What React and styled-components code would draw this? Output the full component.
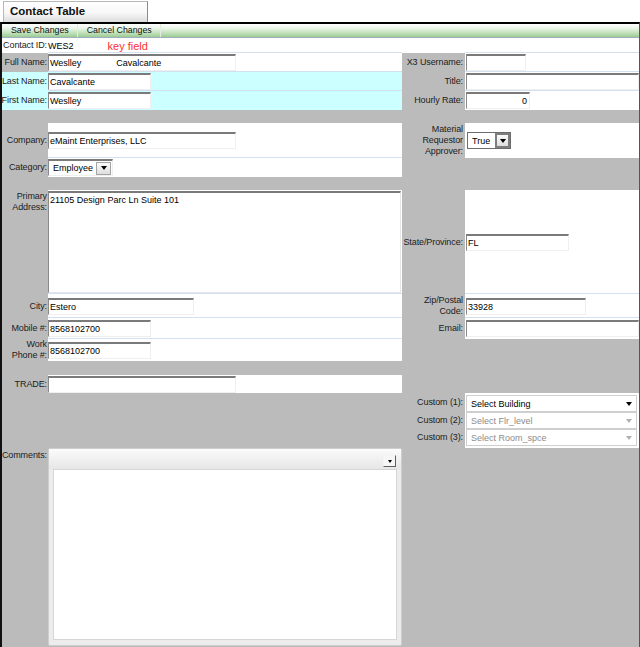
import React from 'react';
import styled, { createGlobalStyle } from 'styled-components';

const GlobalStyle = createGlobalStyle`
  html, body {
    margin: 0;
    padding: 0;
    background: #fff;
  }
  body {
    font-family: "Liberation Sans", Arial, sans-serif;
  }
`;

const Page = styled.div`
  width: 640px;
  height: 647px;
  overflow: hidden;
`;

const TabStrip = styled.div`
  height: 22px;
  padding: 1px 0 0 3px;
  box-sizing: border-box;
`;

const Tab = styled.div`
  width: 145px;
  height: 21px;
  box-sizing: border-box;
  border: 1px solid #b8b8b8;
  border-right-color: #8a8a8a;
  border-bottom: none;
  background: linear-gradient(#ffffff, #f7f7f7 55%, #dcdcdc);
  font: bold 11.5px "Liberation Sans", Arial, sans-serif;
  color: #111;
  padding: 3px 0 0 6px;
`;

const Frame = styled.div`
  height: 625px;
  box-sizing: border-box;
  border-top: 2px solid #000;
  border-left: 2px solid #111;
  border-right: 1px solid #555;
  background: #bbbbbb;
  overflow: hidden;
`;

const Toolbar = styled.div`
  display: flex;
  height: 14px;
  box-sizing: border-box;
  border-bottom: 1px solid #9fb0bd;
  background: linear-gradient(#ffffff 0%, #eef7ec 30%, #c6e3bf 65%, #9bcb93 100%);
`;

const ToolButton = styled.div`
  padding: 0 8px 0 9px;
  font-size: 8.8px;
  line-height: 13px;
  color: #111;
  border-right: 1px solid #e4ece2;
  white-space: nowrap;
`;

const Row = styled.div`
  display: grid;
  grid-template-columns: 46px 354px 63px 174px;
  height: ${p => p.$h}px;
`;

const Gap = styled.div`
  height: ${p => p.$h}px;
`;

const Label = styled.div`
  display: flex;
  align-items: ${p => (p.$top ? 'flex-start' : 'center')};
  justify-content: flex-end;
  text-align: right;
  white-space: nowrap;
  box-sizing: border-box;
  padding: ${p => (p.$top ? `${p.$top}px 1px 0 0` : '0 1px 0 0')};
  background: ${p => p.$bg || 'transparent'};
  font-size: 9px;
  letter-spacing: -0.1px;
  line-height: 11px;
  color: #1c1c1c;
`;

const RightLabel = styled(Label)`
  padding-right: 2px;
`;

const Value = styled.div`
  display: flex;
  align-items: ${p => (p.$top !== undefined ? 'flex-start' : 'center')};
  box-sizing: border-box;
  padding-top: ${p => p.$top || 0}px;
  padding-left: ${p => p.$pl || 0}px;
  background: ${p => p.$bg || 'transparent'};
  box-shadow: ${p => (p.$sep ? 'inset 0 -1px #d3e0ee' : 'none')};
  font-size: 9px;
  color: #000;
`;

const Field = styled.div`
  display: flex;
  align-items: center;
  justify-content: ${p => (p.$right ? 'flex-end' : 'flex-start')};
  width: ${p => p.$w}px;
  height: 17px;
  box-sizing: border-box;
  border-style: solid;
  border-width: 2px 1px 1px 1px;
  border-color: #7a7a7a #efefef #efefef #8a8a8a;
  background: #fff;
  padding: 0 ${p => (p.$right ? 2 : 1)}px 0 1px;
  font-size: 9px;
  color: #000;
  white-space: nowrap;
`;

const Spaced = styled.span`
  margin-left: ${p => p.$ml}px;
`;

const KeyNote = styled.span`
  margin-left: 34px;
  color: #ff3030;
  font-size: 11px;
`;

const TextBox = styled.div`
  width: 353px;
  height: 102px;
  box-sizing: border-box;
  border-style: solid;
  border-width: 2px 1px 1px 1px;
  border-color: #7a7a7a #e6e6e6 #e6e6e6 #8a8a8a;
  background: #fff;
  padding: 2px 1px;
  font-size: 9px;
  line-height: 11px;
`;

const Combo = styled.div`
  display: flex;
  align-items: center;
  justify-content: space-between;
  width: ${p => p.$w}px;
  height: 17px;
  box-sizing: border-box;
  border-style: solid;
  border-width: ${p => (p.$dark ? '1px' : '2px 1px 1px 1px')};
  border-color: ${p => (p.$dark ? '#6c6c6c' : '#7a7a7a #efefef #efefef #8a8a8a')};
  background: #fff;
  padding-left: 4px;
  font-size: 9px;
  color: #000;
`;

const ComboButton = styled.span`
  display: flex;
  align-items: center;
  justify-content: center;
  width: 15px;
  height: ${p => (p.$dark ? 15 : 13)}px;
  box-sizing: border-box;
  border: ${p => (p.$dark ? '2px solid #7e7e7e' : '1px solid #a4a4a4')};
  background: linear-gradient(#fbfbfb, #dedede);
  margin-right: ${p => (p.$dark ? 0 : 1)}px;
`;

const Caret = styled.span`
  width: 0;
  height: 0;
  border-left: ${p => p.$size || 3}px solid transparent;
  border-right: ${p => p.$size || 3}px solid transparent;
  border-top: ${p => (p.$size || 3) + 1}px solid ${p => p.$color || '#000'};
`;

const Dropdown = styled.div`
  display: flex;
  align-items: center;
  justify-content: space-between;
  width: 171px;
  height: 17px;
  box-sizing: border-box;
  margin-left: 1px;
  border: 1px solid #cfcfcf;
  background: #fff;
  padding: 0 4px 0 4px;
  font-size: 9px;
  color: ${p => (p.$muted ? '#8c8c8c' : '#000')};
`;

const Editor = styled.div`
  display: flex;
  flex-direction: column;
  width: 354px;
  height: 198px;
  box-sizing: border-box;
  border: 1px solid #cdcdcd;
  border-radius: 2px;
  background: #ececec;
  padding: 0 4px 5px 4px;
`;

const EditorBar = styled.div`
  display: flex;
  align-items: flex-end;
  justify-content: flex-end;
  height: 20px;
  flex: none;
  margin: 0 -4px;
  padding: 0 5px 2px 0;
  box-sizing: border-box;
  background: linear-gradient(#fbfbfb, #e6e6e6);
`;

const EditorButton = styled.span`
  display: flex;
  align-items: center;
  justify-content: center;
  width: 13px;
  height: 12px;
  box-sizing: border-box;
  border: 1px solid;
  border-color: #f4f4f4 #5e5e5e #5e5e5e #f4f4f4;
  background: #f6f6f6;
`;

const EditorArea = styled.div`
  flex: 1;
  background: #fff;
  border: 1px solid #d6d6d6;
`;

function App() {
  return (
    <Page>
      <GlobalStyle />
      <TabStrip>
        <Tab>Contact Table</Tab>
      </TabStrip>
      <Frame>
        <Toolbar>
          <ToolButton>Save Changes</ToolButton>
          <ToolButton>Cancel Changes</ToolButton>
        </Toolbar>

        <Row $h={15}>
          <Label $bg="#fff">Contact ID:</Label>
          <Value $bg="#fff" $sep>
            WES2<KeyNote>key field</KeyNote>
          </Value>
          <RightLabel $bg="#fff" />
          <Value $bg="#fff" $sep />
        </Row>

        <Row $h={19}>
          <Label>Full Name:</Label>
          <Value $bg="#fff" $sep>
            <Field $w={188}>
              Weslley<Spaced $ml={35}>Cavalcante</Spaced>
            </Field>
          </Value>
          <RightLabel>X3 Username:</RightLabel>
          <Value $bg="#fff" $sep $pl={1}>
            <Field $w={60} />
          </Value>
        </Row>

        <Row $h={19}>
          <Label $bg="#ccffff">Last Name:</Label>
          <Value $bg="#ccffff" $sep>
            <Field $w={103}>Cavalcante</Field>
          </Value>
          <RightLabel>Title:</RightLabel>
          <Value $bg="#fff" $sep $pl={1}>
            <Field $w={173} />
          </Value>
        </Row>

        <Row $h={19}>
          <Label $bg="#ccffff">First Name:</Label>
          <Value $bg="#ccffff">
            <Field $w={103}>Weslley</Field>
          </Value>
          <RightLabel>Hourly Rate:</RightLabel>
          <Value $bg="#fff" $pl={1}>
            <Field $w={64} $right>0</Field>
          </Value>
        </Row>

        <Gap $h={13} />

        <Row $h={35}>
          <Label>Company:</Label>
          <Value $bg="#fff" $sep>
            <Field $w={188}>eMaint Enterprises, LLC</Field>
          </Value>
          <RightLabel>
            Material
            <br />
            Requestor
            <br />
            Approver:
          </RightLabel>
          <Value $bg="#fff" $pl={2}>
            <Combo $w={44} $dark>
              True
              <ComboButton $dark>
                <Caret />
              </ComboButton>
            </Combo>
          </Value>
        </Row>

        <Row $h={19}>
          <Label>Category:</Label>
          <Value $bg="#fff">
            <Combo $w={65}>
              Employee
              <ComboButton>
                <Caret />
              </ComboButton>
            </Combo>
          </Value>
          <RightLabel />
          <Value />
        </Row>

        <Gap $h={13} />

        <Row $h={104}>
          <Label $top={1}>
            Primary
            <br />
            Address:
          </Label>
          <Value $bg="#fff" $sep $top={1}>
            <TextBox>21105 Design Parc Ln Suite 101</TextBox>
          </Value>
          <RightLabel>State/Province:</RightLabel>
          <Value $bg="#fff" $sep $pl={1}>
            <Field $w={103}>FL</Field>
          </Value>
        </Row>

        <Row $h={24}>
          <Label>City:</Label>
          <Value $bg="#fff" $sep>
            <Field $w={146}>Estero</Field>
          </Value>
          <RightLabel>
            Zip/Postal
            <br />
            Code:
          </RightLabel>
          <Value $bg="#fff" $sep $pl={1}>
            <Field $w={120}>33928</Field>
          </Value>
        </Row>

        <Row $h={21}>
          <Label>Mobile #:</Label>
          <Value $bg="#fff" $sep>
            <Field $w={103}>8568102700</Field>
          </Value>
          <RightLabel>Email:</RightLabel>
          <Value $bg="#fff" $pl={1}>
            <Field $w={173} />
          </Value>
        </Row>

        <Row $h={21}>
          <Label>
            Work
            <br />
            Phone #:
          </Label>
          <Value $bg="#fff">
            <Field $w={103}>8568102700</Field>
          </Value>
          <RightLabel />
          <Value />
        </Row>

        <Gap $h={15} />

        <Row $h={18}>
          <Label>TRADE:</Label>
          <Value $bg="#fff">
            <Field $w={188} />
          </Value>
          <RightLabel />
          <Value />
        </Row>

        <Row $h={19}>
          <Label />
          <Value />
          <RightLabel $top={4}>Custom (1):</RightLabel>
          <Value $bg="#fff" $top={2}>
            <Dropdown>
              Select Building
              <Caret $size={3.5} />
            </Dropdown>
          </Value>
        </Row>

        <Row $h={17}>
          <Label />
          <Value />
          <RightLabel>Custom (2):</RightLabel>
          <Value $bg="#fff">
            <Dropdown $muted>
              Select Flr_level
              <Caret $size={3.5} $color="#b0b0b0" />
            </Dropdown>
          </Value>
        </Row>

        <Row $h={19}>
          <Label />
          <Value />
          <RightLabel $top={3}>Custom (3):</RightLabel>
          <Value $bg="#fff" $top={0}>
            <Dropdown $muted>
              Select Room_spce
              <Caret $size={3.5} $color="#b0b0b0" />
            </Dropdown>
          </Value>
        </Row>

        <Row $h={199}>
          <Label $top={2}>Comments:</Label>
          <Value $top={0}>
            <Editor>
              <EditorBar>
                <EditorButton>
                  <Caret $size={2.5} />
                </EditorButton>
              </EditorBar>
              <EditorArea />
            </Editor>
          </Value>
          <RightLabel />
          <Value />
        </Row>
      </Frame>
    </Page>
  );
}

export default App;
